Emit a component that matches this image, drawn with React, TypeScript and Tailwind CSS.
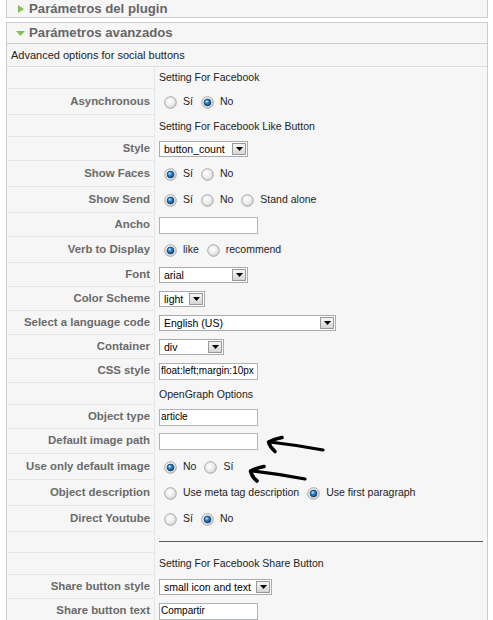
import React from "react";

const Radio = ({ checked }: { checked?: boolean }) => (
  <svg width="13" height="13" viewBox="0 0 13 13" className="shrink-0 ml-[5px]">
    <circle cx="6.5" cy="6.5" r="5.8" fill="url(#rgGray)" stroke="#a8a8a8" strokeWidth="1" />
    {checked && (
      <>
        <circle cx="6.5" cy="6.5" r="3.4" fill="url(#rgBlue)" stroke="#0e3b66" strokeWidth="0.8" />
        <circle cx="5.6" cy="5.5" r="1" fill="#bfe4ff" opacity="0.9" />
      </>
    )}
  </svg>
);

const Opt = ({ checked, label }: { checked?: boolean; label: string }) => (
  <>
    <Radio checked={checked} />
    <span className="ml-[6px] mr-[3px] whitespace-nowrap">{label}</span>
  </>
);

const Arrow = () => (
  <div className="w-[14px] h-[12px] mr-[1px] border border-[#9a9a9a] bg-gradient-to-b from-[#f5f5f5] to-[#d6d6d6] flex items-center justify-center shrink-0">
    <svg width="7" height="4" viewBox="0 0 7 4">
      <path d="M0 0H7L3.5 4Z" fill="#000" />
    </svg>
  </div>
);

const Select = ({ value, className }: { value: string; className: string }) => (
  <div
    className={
      "h-[16px] border border-[#a5acb2] bg-white flex items-center justify-between text-[10.5px] text-black " +
      className
    }
  >
    <span className="pl-[4px] whitespace-nowrap leading-none">{value}</span>
    <Arrow />
  </div>
);

const Input = ({ value }: { value?: string }) => (
  <div className="h-[17px] w-[99px] border border-[#b0b4b8] bg-white flex items-center text-[10px] text-black overflow-hidden whitespace-nowrap pl-[1px] leading-none">
    {value}
  </div>
);

type Row = { label?: string; h: string; content: React.ReactNode };

const rows: Row[] = [
  { h: "h-[22px]", content: <span>Setting For Facebook</span> },
  {
    label: "Asynchronous",
    h: "h-[26px]",
    content: (
      <>
        <Opt label="Sí" />
        <Opt checked label="No" />
      </>
    ),
  },
  { h: "h-[22px]", content: <span className="pt-[2px]">Setting For Facebook Like Button</span> },
  { label: "Style", h: "h-[24px]", content: <Select value="button_count" className="w-[89px]" /> },
  {
    label: "Show Faces",
    h: "h-[26px]",
    content: (
      <>
        <Opt checked label="Sí" />
        <Opt label="No" />
      </>
    ),
  },
  {
    label: "Show Send",
    h: "h-[26px]",
    content: (
      <>
        <Opt checked label="Sí" />
        <Opt label="No" />
        <Opt label="Stand alone" />
      </>
    ),
  },
  { label: "Ancho", h: "h-[24px]", content: <Input /> },
  {
    label: "Verb to Display",
    h: "h-[26px]",
    content: (
      <>
        <Opt checked label="like" />
        <Opt label="recommend" />
      </>
    ),
  },
  { label: "Font", h: "h-[24px]", content: <Select value="arial" className="w-[89px]" /> },
  { label: "Color Scheme", h: "h-[24px]", content: <Select value="light" className="w-[46px]" /> },
  {
    label: "Select a language code",
    h: "h-[24px]",
    content: <Select value="English (US)" className="w-[177px]" />,
  },
  { label: "Container", h: "h-[24px]", content: <Select value="div" className="w-[65px]" /> },
  { label: "CSS style", h: "h-[24px]", content: <Input value="float:left;margin:10px" /> },
  { h: "h-[22px]", content: <span className="pt-[2px]">OpenGraph Options</span> },
  { label: "Object type", h: "h-[24px]", content: <Input value="article" /> },
  { label: "Default image path", h: "h-[25px]", content: <Input /> },
  {
    label: "Use only default image",
    h: "h-[26px]",
    content: (
      <>
        <Opt checked label="No" />
        <Opt label="Sí" />
      </>
    ),
  },
  {
    label: "Object description",
    h: "h-[26px]",
    content: (
      <>
        <Opt label="Use meta tag description" />
        <Opt checked label="Use first paragraph" />
      </>
    ),
  },
  {
    label: "Direct Youtube",
    h: "h-[26px]",
    content: (
      <>
        <Opt label="Sí" />
        <Opt checked label="No" />
      </>
    ),
  },
  {
    h: "h-[21px]",
    content: <div className="flex-1 mr-[4px] mb-[3px] h-0 border-t border-[#5a5a5a]" />,
  },
  { h: "h-[22px]", content: <span>Setting For Facebook Share Button</span> },
  {
    label: "Share button style",
    h: "h-[24px]",
    content: <Select value="small icon and text" className="w-[113px]" />,
  },
  { label: "Share button text", h: "h-[24px]", content: <Input value="Compartir" /> },
];

export default function App() {
  return (
    <div className="relative w-[493px] h-[620px] overflow-hidden bg-white font-['Liberation_Sans',Arial,sans-serif]">
      <svg width="0" height="0" className="absolute">
        <defs>
          <radialGradient id="rgGray" cx="0.42" cy="0.4" r="0.65">
            <stop offset="0" stopColor="#ffffff" />
            <stop offset="0.55" stopColor="#ececec" />
            <stop offset="1" stopColor="#cdcdcd" />
          </radialGradient>
          <radialGradient id="rgBlue" cx="0.4" cy="0.35" r="0.7">
            <stop offset="0" stopColor="#6fc0f0" />
            <stop offset="0.5" stopColor="#2478bf" />
            <stop offset="1" stopColor="#0f4276" />
          </radialGradient>
        </defs>
      </svg>

      <div className="ml-[6px] w-[482px]">
        {/* collapsed panel */}
        <div className="h-[18px] border-x border-b border-[#cccccc] bg-[#f6f6f6] flex items-center pl-[9px]">
          <div className="w-[9px] flex justify-center">
            <svg width="6" height="8" viewBox="0 0 6 8">
              <path d="M0 0L6 4L0 8Z" fill="#84bf55" />
            </svg>
          </div>
          <span className="ml-[4px] text-[13.2px] font-bold text-[#666] leading-none">Parámetros del plugin</span>
        </div>

        {/* expanded panel */}
        <div className="mt-[4px] border border-[#cccccc] bg-[#f6f6f6]">
          <div className="h-[21px] border-b border-[#cccccc] flex items-center pl-[9px]">
            <div className="w-[9px] flex justify-center">
              <svg width="9" height="5" viewBox="0 0 9 5">
                <path d="M0 0H9L4.5 5Z" fill="#84bf55" />
              </svg>
            </div>
            <span className="ml-[4px] text-[13.2px] font-bold text-[#666] leading-none">Parámetros avanzados</span>
          </div>
          <div className="h-[23px] border-b border-[#dddddd] flex items-center pl-[4px] text-[11px] text-[#222]">
            Advanced options for social buttons
          </div>

          <div className="flex flex-col">
            {rows.map((r, i) => (
              <div key={i} className={"flex " + r.h}>
                <div className="ml-[1px] w-[147px] shrink-0 border-r border-b border-[#e6e6e6] bg-[#f6f6f6] flex items-center justify-end pr-[4px] text-[11.4px] font-bold text-[#6a6a6a] whitespace-nowrap">
                  {r.label}
                </div>
                <div className="flex-1 flex items-center pl-[4px] text-[10.5px] text-[#222]">{r.content}</div>
              </div>
            ))}
          </div>
        </div>
      </div>

      {/* hand-drawn arrows */}
      <svg className="absolute left-0 top-0 pointer-events-none" width="493" height="620" viewBox="0 0 493 620">
        <g fill="none" stroke="#000" strokeLinecap="round" strokeLinejoin="round">
          <path d="M282 437.5 Q274 439 268.5 442 Q270 447 275 451.5" strokeWidth="3.6" />
          <path d="M270 442 Q296 445 323 450" strokeWidth="3.2" />
          <path d="M264 466.5 Q256 468 250.5 471 Q252 477 257 481" strokeWidth="3.6" />
          <path d="M252 471 Q278 474 305 479" strokeWidth="3.2" />
        </g>
      </svg>
    </div>
  );
}
